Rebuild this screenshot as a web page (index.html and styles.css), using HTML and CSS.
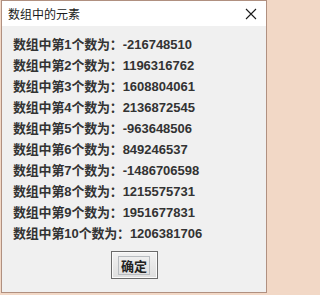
FILE: index.html
```html
<!DOCTYPE html>
<html lang="zh">
<head>
<meta charset="utf-8">
<title>数组中的元素</title>
<link rel="stylesheet" href="styles.css">
</head>
<body>
<div class="window">
  <div class="titlebar">
    <span class="title">数组中的元素</span>
    <svg class="close" width="12" height="12" viewBox="0 0 12 12"><path d="M1 1 L11 11 M11 1 L1 11" stroke="#1a1a1a" stroke-width="1.1" fill="none"/></svg>
  </div>
  <div class="content">
    <div class="lines">
      <div class="line">数组中第<span class="num">1</span>个数为：<span class="num">-216748510</span></div>
      <div class="line">数组中第<span class="num">2</span>个数为：<span class="num">1196316762</span></div>
      <div class="line">数组中第<span class="num">3</span>个数为：<span class="num">1608804061</span></div>
      <div class="line">数组中第<span class="num">4</span>个数为：<span class="num">2136872545</span></div>
      <div class="line">数组中第<span class="num">5</span>个数为：<span class="num">-963648506</span></div>
      <div class="line">数组中第<span class="num">6</span>个数为：<span class="num">849246537</span></div>
      <div class="line">数组中第<span class="num">7</span>个数为：<span class="num">-1486706598</span></div>
      <div class="line">数组中第<span class="num">8</span>个数为：<span class="num">1215575731</span></div>
      <div class="line">数组中第<span class="num">9</span>个数为：<span class="num">1951677831</span></div>
      <div class="line">数组中第<span class="num">10</span>个数为：<span class="num">1206381706</span></div>
    </div>
    <div class="actions">
      <button class="ok"><span class="focus">确定</span></button>
    </div>
  </div>
</div>
</body>
</html>
```
FILE: styles.css
```css
html, body {
  margin: 0;
  padding: 0;
}
body {
  background: #f2d8c6;
  width: 268px;
  height: 295px;
  overflow: hidden;
}
.window {
  margin-left: 1px;
  width: 264px;
  height: 291px;
  border: 1px solid #b09080;
  display: flex;
  flex-direction: column;
  background: #f0f0f0;
}
.titlebar {
  height: 25px;
  background: #ffffff;
  display: flex;
  align-items: center;
  justify-content: space-between;
  padding: 0 9px 0 6px;
}
.title {
  font-family: "Noto Sans CJK SC", sans-serif;
  font-size: 12px;
  color: #1a1a1a;
}
.close {
  display: block;
}
.content {
  flex: 1;
  display: flex;
  flex-direction: column;
  padding: 7px 0 0 11px;
}
.line {
  height: 21px;
  line-height: 21px;
  font-family: "Noto Sans CJK SC", sans-serif;
  font-weight: bold;
  font-size: 13px;
  letter-spacing: -0.2px;
  color: #333333;
  white-space: nowrap;
}
.num {
  font-family: "Liberation Sans", Arial, sans-serif;
  font-weight: bold;
  font-size: 13px;
  letter-spacing: 0;
}
.actions {
  display: flex;
  justify-content: center;
  margin-top: 8px;
  padding-right: 11px;
}
.ok {
  width: 47px;
  height: 28px;
  padding: 0;
  border: 1px solid #6a6a6a;
  background: linear-gradient(#f2f2f2, #dedede);
  box-shadow: inset 0 0 0 1px #fafafa;
  display: flex;
  align-items: center;
  justify-content: center;
}
.focus {
  font-family: "Noto Sans CJK SC", sans-serif;
  font-weight: bold;
  font-size: 13px;
  color: #222222;
  line-height: 17px;
  padding: 0 2px;
  border: 1px solid #b8bcc0;
}
```
